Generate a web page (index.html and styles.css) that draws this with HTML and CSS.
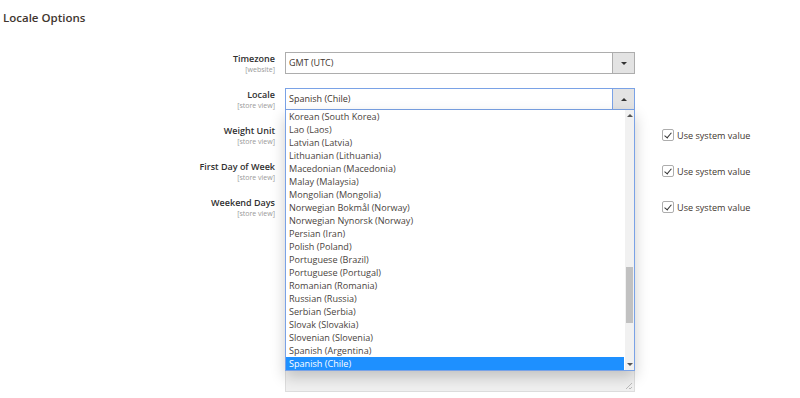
FILE: index.html
```html
<!DOCTYPE html>
<html lang="en">
<head>
  <meta charset="UTF-8">
  <title>Locale Options</title>
  <link rel="stylesheet" href="styles.css">
</head>
<body>

<h2 class="section-title">Locale Options</h2>

<div class="fieldset">
  <div class="field">
    <div class="label"><span>Timezone</span><small>[website]</small></div>
    <div class="control">
      <div class="select">GMT (UTC)<span class="select-btn"><i class="tri down"></i></span></div>
    </div>
  </div>

  <div class="field">
    <div class="label"><span>Locale</span><small>[store view]</small></div>
    <div class="control">
      <div class="select open">Spanish (Chile)<span class="select-btn"><i class="tri up"></i></span></div>
      <ul class="dropdown">
        <li>Korean (South Korea)</li>
        <li>Lao (Laos)</li>
        <li>Latvian (Latvia)</li>
        <li>Lithuanian (Lithuania)</li>
        <li>Macedonian (Macedonia)</li>
        <li>Malay (Malaysia)</li>
        <li>Mongolian (Mongolia)</li>
        <li>Norwegian Bokmål (Norway)</li>
        <li>Norwegian Nynorsk (Norway)</li>
        <li>Persian (Iran)</li>
        <li>Polish (Poland)</li>
        <li>Portuguese (Brazil)</li>
        <li>Portuguese (Portugal)</li>
        <li>Romanian (Romania)</li>
        <li>Russian (Russia)</li>
        <li>Serbian (Serbia)</li>
        <li>Slovak (Slovakia)</li>
        <li>Slovenian (Slovenia)</li>
        <li>Spanish (Argentina)</li>
        <li class="selected">Spanish (Chile)</li>
      </ul>
      <div class="scrollbar">
        <i class="tri up small"></i>
        <div class="thumb"></div>
        <i class="tri down small"></i>
      </div>
    </div>
  </div>

  <div class="field">
    <div class="label"><span>Weight Unit</span><small>[store view]</small></div>
    <div class="control"><div class="select"></div></div>
    <label class="inherit"><span class="checkbox"></span>Use system value</label>
  </div>

  <div class="field">
    <div class="label"><span>First Day of Week</span><small>[store view]</small></div>
    <div class="control"><div class="select"></div></div>
    <label class="inherit"><span class="checkbox"></span>Use system value</label>
  </div>

  <div class="field">
    <div class="label"><span>Weekend Days</span><small>[store view]</small></div>
    <div class="control"><div class="multiselect"><span class="grip"></span></div></div>
    <label class="inherit"><span class="checkbox"></span>Use system value</label>
  </div>
</div>

</body>
</html>
```

FILE: styles.css
```css
:root {
  --text-main: #303030;
  --text-muted: #999;
  --border: #adadad;
  --focus: #7aa2e6;
  --highlight: #1e90ff;
}

body {
  margin: 0;
  background: #fff;
  font-family: 'Open Sans', 'Liberation Sans', sans-serif;
  color: var(--text-main);
  overflow: hidden;
}

.section-title {
  margin: 0;
  padding: 10px 0 0 3px;
  font-size: 11.5px;
  font-weight: 600;
  line-height: 16px;
  color: #41362f;
}

.fieldset {
  padding-top: 26px;
  display: flex;
  flex-direction: column;
  gap: 14px;
}

.field {
  display: flex;
  align-items: flex-start;
}

.label {
  width: 275px;
  padding-top: 1px;
  display: flex;
  flex-direction: column;
  align-items: flex-end;
  text-align: right;
}

.label span {
  font-size: 9px;
  font-weight: 600;
  line-height: 12px;
}

.label small {
  font-size: 7px;
  line-height: 9px;
  color: var(--text-muted);
}

.control {
  position: relative;
  width: 350px;
  margin-left: 10px;
}

.select {
  box-sizing: border-box;
  height: 22px;
  border: 1px solid var(--border);
  background: #fff;
  padding: 0 0 0 3px;
  font-size: 9px;
  line-height: 20px;
  color: #41362f;
  position: relative;
}

.select.open {
  border-color: var(--focus);
}

.select-btn {
  position: absolute;
  top: 0;
  right: 0;
  width: 21px;
  height: 20px;
  background: #e3e3e3;
  border-left: 1px solid var(--border);
  display: flex;
  align-items: center;
  justify-content: center;
}

.select.open .select-btn {
  border-left-color: var(--focus);
}

.tri {
  width: 0;
  height: 0;
  border-left: 3px solid transparent;
  border-right: 3px solid transparent;
}

.tri.down { border-top: 3px solid #333; }
.tri.up { border-bottom: 3px solid #333; }
.tri.small.up { border-bottom-color: #555; }
.tri.small.down { border-top-color: #555; }

.dropdown {
  position: absolute;
  top: 22px;
  left: 0;
  z-index: 2;
  box-sizing: border-box;
  width: 350px;
  margin: 0;
  padding: 0 10px 0 0;
  list-style: none;
  background: #fff;
  border: 1px solid var(--focus);
  border-top: none;
  box-shadow: 0 6px 14px rgba(0, 0, 0, 0.2);
}

.dropdown li {
  height: 13px;
  padding-left: 3px;
  font-size: 9.1px;
  line-height: 13px;
  color: #4a4440;
  white-space: nowrap;
}

.dropdown li.selected {
  background: var(--highlight);
  color: #fff;
}

.scrollbar {
  position: absolute;
  z-index: 3;
  top: 22px;
  right: 1px;
  width: 9px;
  height: 260px;
  background: #f1f1f1;
  display: flex;
  flex-direction: column;
  align-items: center;
}

.scrollbar .tri.up { margin-top: 4px; }
.scrollbar .tri.down { margin-top: auto; margin-bottom: 4px; }

.thumb {
  width: 7px;
  height: 56px;
  margin-top: 150px;
  background: #c1c1c1;
}

.multiselect {
  box-sizing: border-box;
  height: 196px;
  border: 1px solid #ddd;
  background: #f0f0f0;
  position: relative;
}

.grip {
  position: absolute;
  right: 2px;
  bottom: 2px;
  width: 6px;
  height: 6px;
  background: linear-gradient(135deg, transparent 45%, #bbb 45%, #bbb 55%, transparent 55%, transparent 75%, #bbb 75%, #bbb 85%, transparent 85%);
}

.inherit {
  display: flex;
  align-items: center;
  gap: 3px;
  height: 22px;
  margin-left: 27px;
  font-size: 9.1px;
  color: #41362f;
}

.checkbox {
  box-sizing: border-box;
  width: 12px;
  height: 12px;
  border: 1px solid var(--border);
  border-radius: 2px;
  position: relative;
}

.checkbox::after {
  content: "";
  position: absolute;
  left: 3px;
  top: 1px;
  width: 3px;
  height: 6px;
  border-right: 1.5px solid #333;
  border-bottom: 1.5px solid #333;
  transform: rotate(40deg);
}
```
